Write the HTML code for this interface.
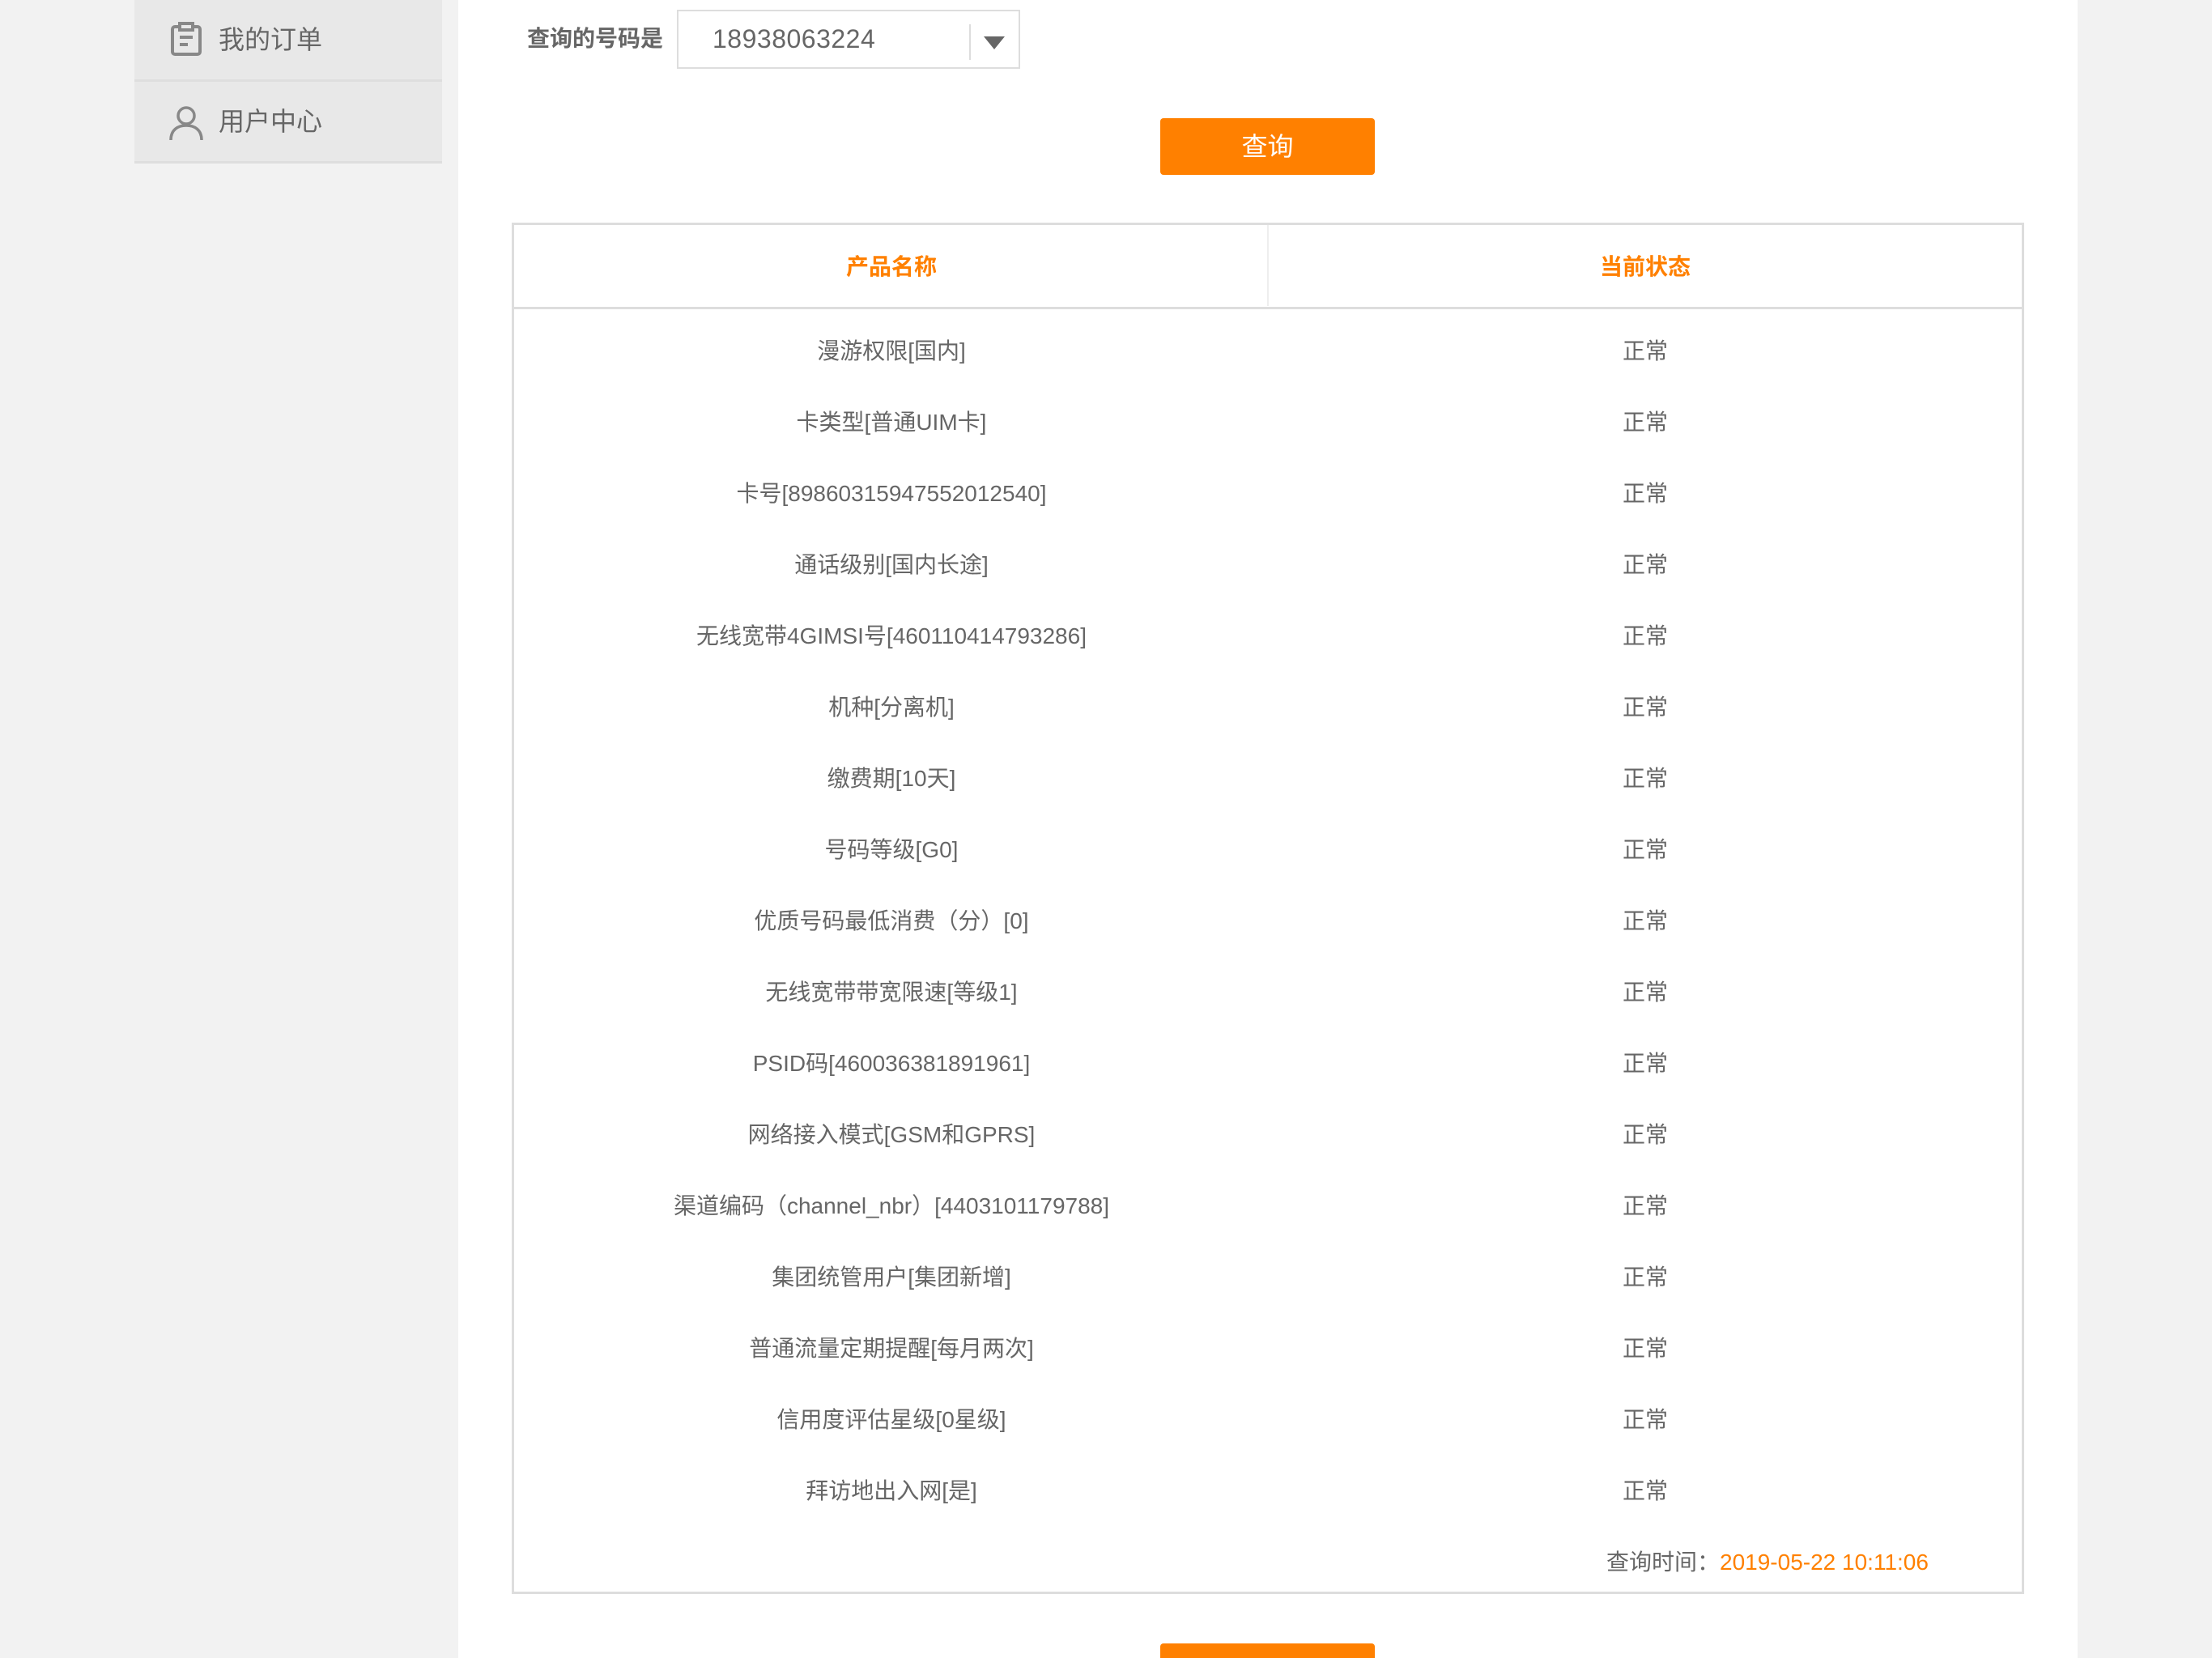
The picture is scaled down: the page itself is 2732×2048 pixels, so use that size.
<!DOCTYPE html>
<html style="width:2732px;height:2048px;overflow:hidden"><head><meta charset="utf-8"><style>
*{margin:0;padding:0;box-sizing:border-box}
body{width:2732px;height:2048px;background:#f2f2f2;font-family:"Liberation Sans","Noto Sans CJK SC",sans-serif;color:#666;position:relative;overflow:hidden}
.abs{position:absolute}
.menu{left:166px;width:380px;background:#e8e8e8;border-bottom:3px solid #dedede}
.mtext{position:absolute;left:104px;font-size:32px;color:#666;line-height:40px}
.panel{left:566px;top:0;width:2000px;height:2048px;background:#fff}
.tbl{left:632px;top:275px;width:1868px;height:1694px;border:3px solid #ddd;background:#fff}
.row{position:absolute;left:0;width:100%;height:88px;font-size:28px;line-height:88px;color:#666}
.c1{position:absolute;left:0;width:932px;text-align:center;white-space:nowrap}
.c2{position:absolute;left:932px;width:930px;text-align:center}
</style></head><body>
<div class="abs menu" style="top:0;height:101px">
 <svg class="abs" style="left:44px;top:26px" width="40" height="44" viewBox="0 0 40 44" fill="none" stroke="#888" stroke-width="4"><rect x="3" y="7" width="34" height="34" rx="3"/><rect x="12" y="3" width="16" height="8" fill="#e8e8e8"/><line x1="12" y1="20" x2="28" y2="20"/><line x1="12" y1="29" x2="22" y2="29"/></svg>
 <div class="mtext" style="top:29px">我的订单</div>
</div>
<div class="abs menu" style="top:101px;height:101px">
 <svg class="abs" style="left:42px;top:29px" width="44" height="44" viewBox="0 0 44 44" fill="none" stroke="#888" stroke-width="3.5"><circle cx="22" cy="13" r="10"/><path d="M3 43 C3 30 12 25 22 25 C32 25 41 30 41 43"/></svg>
 <div class="mtext" style="top:29px">用户中心</div>
</div>
<div class="abs panel"></div>
<div class="abs" style="left:651px;top:30px;font-size:28px;font-weight:bold;color:#666;line-height:36px">查询的号码是</div>
<div class="abs" style="left:836px;top:12px;width:424px;height:73px;border:2px solid #ddd;background:#fff">
 <div class="abs" style="left:42px;top:14px;font-size:32px;color:#666;line-height:40px;letter-spacing:0.5px">18938063224</div>
 <div class="abs" style="left:359px;top:16px;width:2px;height:44px;background:#ddd"></div>
 <div class="abs" style="left:377px;top:31px;width:0;height:0;border-left:13px solid transparent;border-right:13px solid transparent;border-top:16px solid #666"></div>
</div>
<div class="abs" style="left:1433px;top:146px;width:265px;height:70px;background:#ff8000;border-radius:4px;color:#fff;font-size:32px;text-align:center;line-height:70px">查询</div>
<div class="abs tbl">
 <div class="abs" style="left:0;top:0;width:100%;height:104px;border-bottom:3px solid #ddd">
  <div class="c1" style="top:0;line-height:104px;font-size:28px;font-weight:bold;color:#ff8000">产品名称</div>
  <div class="abs" style="left:930px;top:0;width:2px;height:100px;background:#eee"></div>
  <div class="c2" style="top:0;line-height:104px;font-size:28px;font-weight:bold;color:#ff8000">当前状态</div>
 </div>
 <div class="row" style="top:112px"><div class="c1">漫游权限[国内]</div><div class="c2">正常</div></div>
 <div class="row" style="top:200px"><div class="c1">卡类型[普通UIM卡]</div><div class="c2">正常</div></div>
 <div class="row" style="top:288px"><div class="c1">卡号[89860315947552012540]</div><div class="c2">正常</div></div>
 <div class="row" style="top:376px"><div class="c1">通话级别[国内长途]</div><div class="c2">正常</div></div>
 <div class="row" style="top:464px"><div class="c1">无线宽带4GIMSI号[460110414793286]</div><div class="c2">正常</div></div>
 <div class="row" style="top:552px"><div class="c1">机种[分离机]</div><div class="c2">正常</div></div>
 <div class="row" style="top:640px"><div class="c1">缴费期[10天]</div><div class="c2">正常</div></div>
 <div class="row" style="top:728px"><div class="c1">号码等级[G0]</div><div class="c2">正常</div></div>
 <div class="row" style="top:816px"><div class="c1">优质号码最低消费（分）[0]</div><div class="c2">正常</div></div>
 <div class="row" style="top:904px"><div class="c1">无线宽带带宽限速[等级1]</div><div class="c2">正常</div></div>
 <div class="row" style="top:992px"><div class="c1">PSID码[460036381891961]</div><div class="c2">正常</div></div>
 <div class="row" style="top:1080px"><div class="c1">网络接入模式[GSM和GPRS]</div><div class="c2">正常</div></div>
 <div class="row" style="top:1168px"><div class="c1">渠道编码（channel_nbr）[4403101179788]</div><div class="c2">正常</div></div>
 <div class="row" style="top:1256px"><div class="c1">集团统管用户[集团新增]</div><div class="c2">正常</div></div>
 <div class="row" style="top:1344px"><div class="c1">普通流量定期提醒[每月两次]</div><div class="c2">正常</div></div>
 <div class="row" style="top:1432px"><div class="c1">信用度评估星级[0星级]</div><div class="c2">正常</div></div>
 <div class="row" style="top:1520px"><div class="c1">拜访地出入网[是]</div><div class="c2">正常</div></div>
 <div class="abs" style="left:1349px;top:1632px;font-size:28px;line-height:40px;white-space:nowrap">查询时间：<span style="color:#ff8000">2019-05-22 10:11:06</span></div>
</div>
<div class="abs" style="left:1433px;top:2030px;width:265px;height:18px;background:#ff8000;border-radius:4px 4px 0 0"></div>
</body></html>
